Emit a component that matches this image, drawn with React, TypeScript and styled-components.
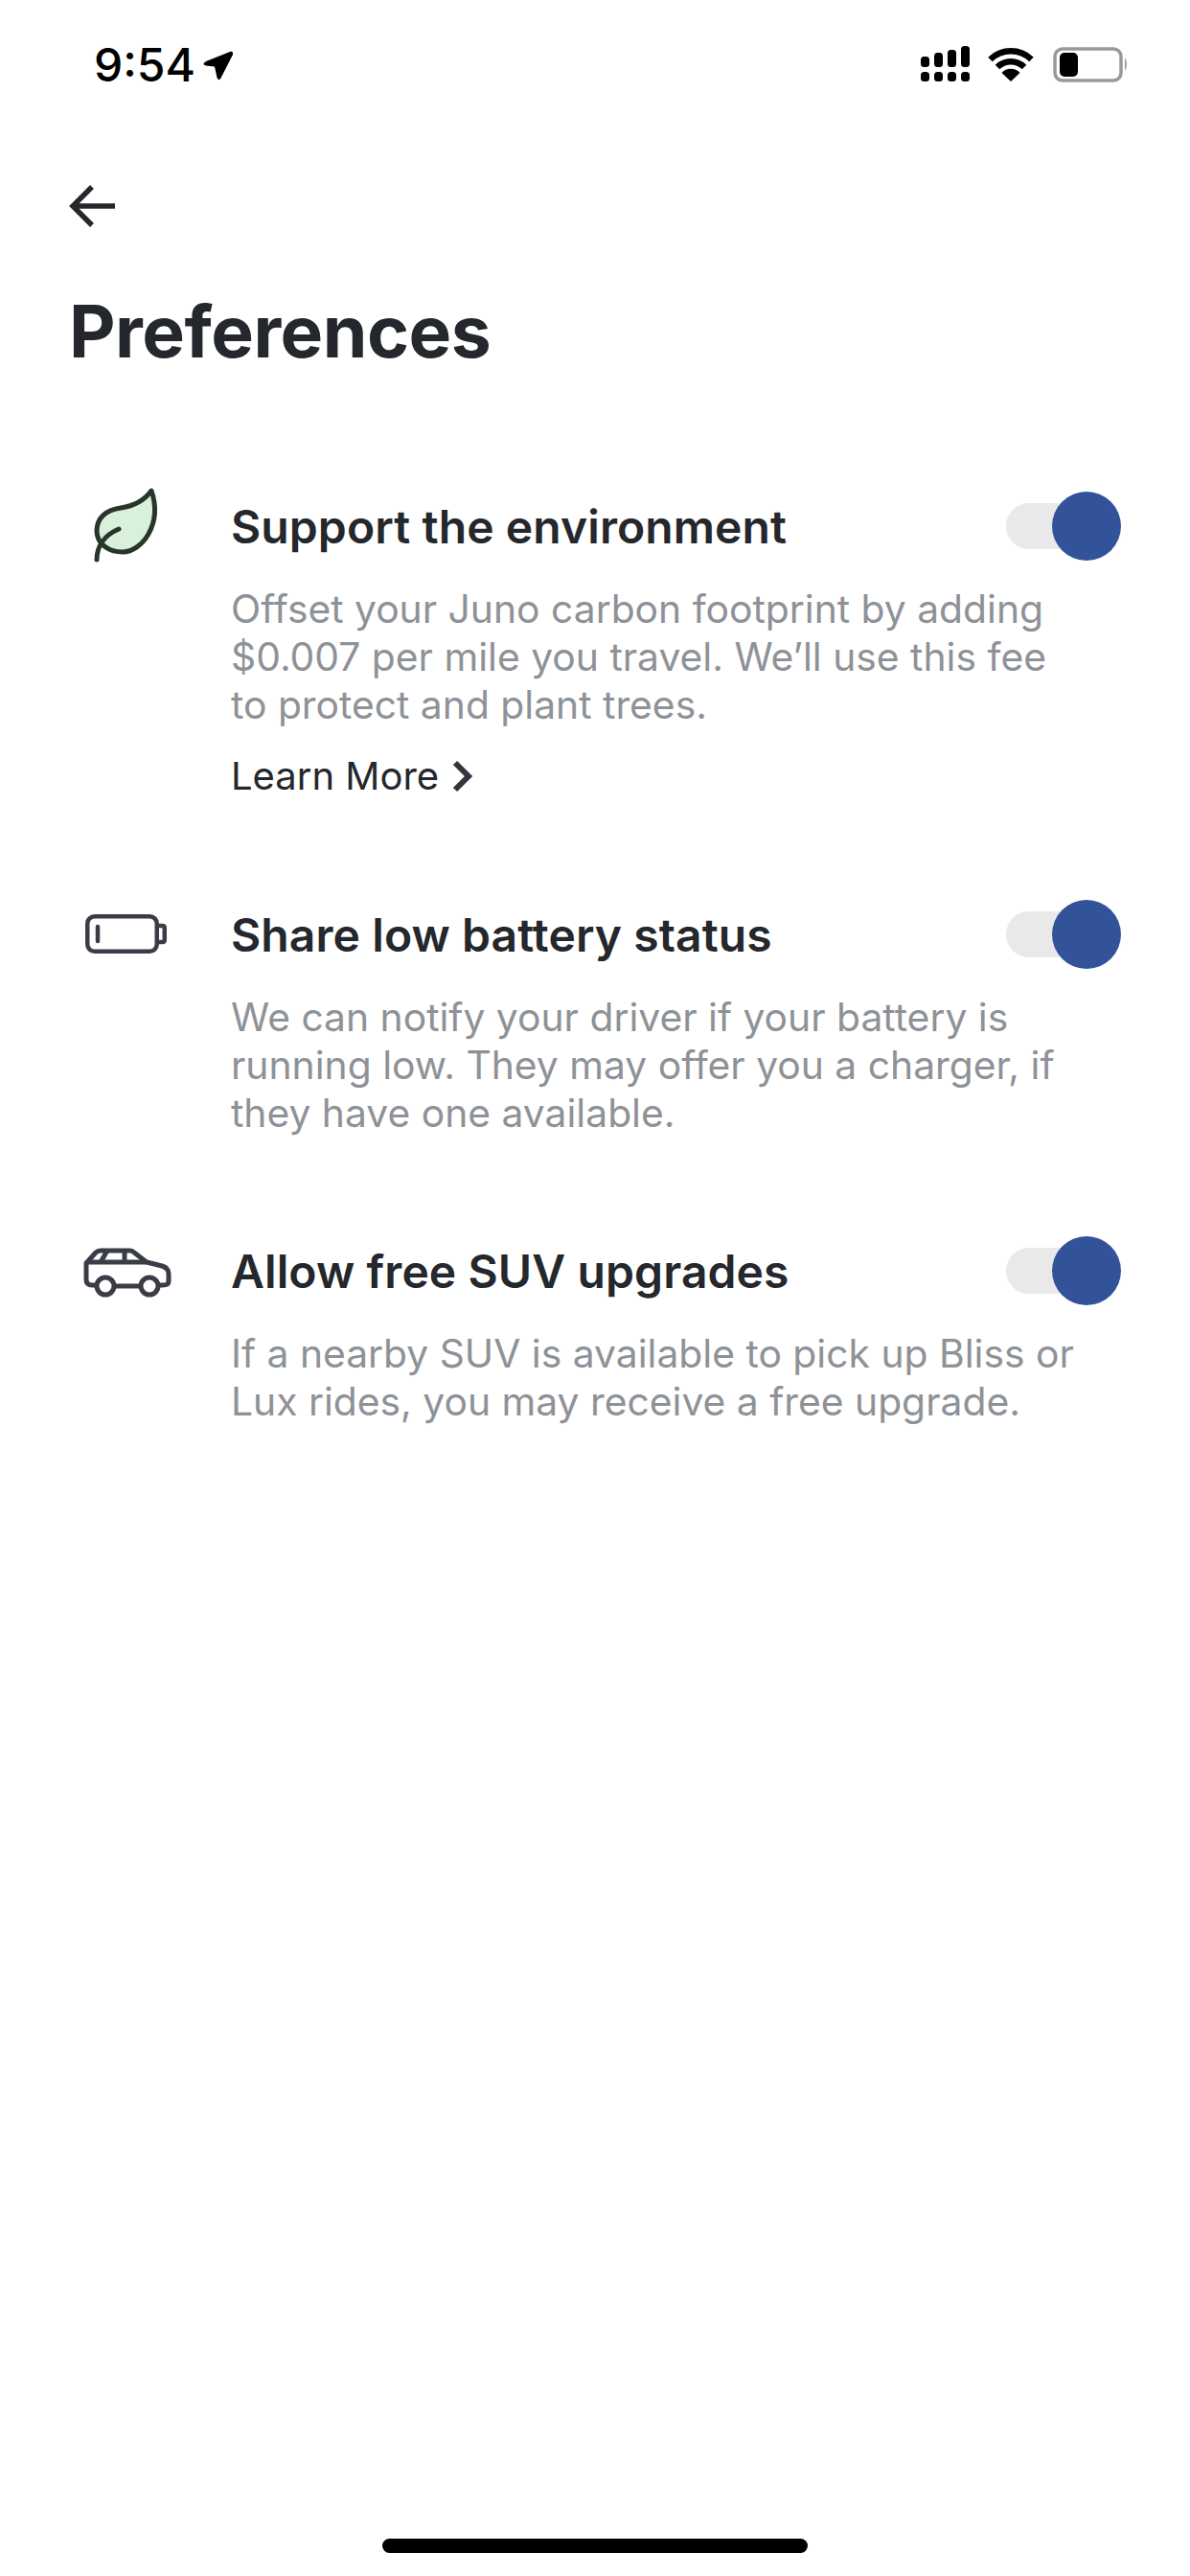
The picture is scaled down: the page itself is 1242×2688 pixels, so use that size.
import React from 'react'
import styled, { createGlobalStyle } from 'styled-components'

const GlobalStyle = createGlobalStyle`
    html, body {
        margin: 0;
        padding: 0;
        background: #fff;
    }
    body {
        font-family: Inter, "Noto Sans", "Liberation Sans", sans-serif;
    }
`

const Page = styled.div`
    width: 1242px;
    height: 2688px;
    display: flex;
    flex-direction: column;
    background: #fff;
    overflow: hidden;
`

const StatusBar = styled.div`
    display: flex;
    align-items: center;
    justify-content: space-between;
    height: 45px;
    padding: 45px 61px 0 98px;
`

const TimeGroup = styled.div`
    display: flex;
    align-items: center;
    gap: 6px;
`

const Time = styled.span`
    color: #000;
    font-size: 48px;
    font-weight: 550;
    line-height: 45px;
`

const BackButton = styled.div`
    display: flex;
    align-items: center;
    height: 50px;
    margin: 100px 0 0 72px;
`

const Heading = styled.h1`
    color: #24272c;
    font-size: 75px;
    font-weight: 700;
    line-height: 88px;
    letter-spacing: -0.5px;
    margin: 62px 0 0 72px;
`

const Settings = styled.div`
    display: flex;
    flex-direction: column;
    gap: 104px;
    margin-top: 123px;
    padding: 0 72px;
`

const Setting = styled.section`
    display: grid;
    grid-template-columns: 120px 1fr;
    column-gap: 49px;
`

const IconSlot = styled.div`
    display: flex;
    align-items: center;
    justify-content: center;
    height: 72px;
`

const SettingHeader = styled.div`
    display: flex;
    align-items: center;
    justify-content: space-between;
    height: 72px;
`

const SettingTitle = styled.h2`
    color: #24272c;
    font-size: 48px;
    font-weight: 600;
    letter-spacing: 0.1px;
    margin: 0;
`

const Toggle = styled.div`
    position: relative;
    display: flex;
    align-items: center;
    width: 120px;
    height: 72px;
`

const ToggleTrack = styled.div`
    width: 100px;
    height: 48px;
    border-radius: 24px;
    background: #e9e9e9;
`

const ToggleKnob = styled.div`
    position: absolute;
    top: 0;
    right: 0;
    width: 72px;
    height: 72px;
    border-radius: 50%;
    background: #32529a;
`

const Description = styled.p`
    color: #8e9297;
    font-size: 40.8px;
    line-height: 50px;
    margin: 25px 0 0;
    white-space: pre-line;
`

const LearnMore = styled.div`
    display: flex;
    align-items: center;
    gap: 14px;
    color: #24272c;
    font-size: 40px;
    line-height: 50px;
    margin-top: 25px;
`

const HomeIndicator = styled.div`
    width: 444px;
    height: 15px;
    border-radius: 8px;
    background: #000;
    margin: auto auto 24px;
`

const LocationArrow = () => (
    <svg width="34" height="34" viewBox="132 20 34 34">
        <path d="M162 23 L137 33 Q132 36 137 37.5 L146 38.5 L148.5 50 Q150 54 152.5 50.5 L165 26 Q165.5 22 162 23 Z" fill="#000" />
    </svg>
)

const SystemIcons = () => (
    <svg width="220" height="45" viewBox="30 15 220 45">
        <g fill="#000">
            <rect x="30" y="29" width="9" height="11" rx="3.5" />
            <rect x="44" y="25" width="9" height="15" rx="3.5" />
            <rect x="58" y="22" width="9" height="18" rx="3.5" />
            <rect x="72" y="18" width="9" height="22" rx="3.5" />
            <rect x="30" y="45" width="9" height="10" rx="3.5" />
            <rect x="44" y="45" width="9" height="10" rx="3.5" />
            <rect x="58" y="45" width="9" height="10" rx="3.5" />
            <rect x="72" y="45" width="9" height="10" rx="3.5" />
            <path d="M124 55 L114.5 46 A13 13 0 0 1 133.5 46 Z" />
        </g>
        <g fill="none" stroke="#000" strokeWidth="6.5">
            <path d="M102.5 32 A31 31 0 0 1 145.5 32" />
            <path d="M110 40 A20 20 0 0 1 138 40" />
        </g>
        <rect x="170" y="21" width="69" height="33" rx="8" fill="none" stroke="#999" strokeWidth="3.5" />
        <rect x="175" y="25" width="19" height="25" rx="5" fill="#000" />
        <path d="M243 30 Q247 37 243 44 Z" fill="#999" />
    </svg>
)

const BackArrow = () => (
    <svg width="50" height="46" viewBox="0 0 50 46">
        <path d="M48 23 H4 M24 3 L4 23 L24 43" fill="none" stroke="#24272c" strokeWidth="5.5" />
    </svg>
)

const LeafIcon = () => (
    <svg width="84" height="96" viewBox="30 12 84 96">
        <path
            d="M98 23 C90 34 80 39 66 41 C50 43 41 52 41 65 C41 79 54 87 68 87 C88 87 110 58 98 23 Z"
            fill="#d9f0db"
            stroke="#28352b"
            strokeWidth="5"
            strokeLinejoin="round"
        />
        <path d="M41 95 C41 80 50 69 64 63" fill="none" stroke="#28352b" strokeWidth="5" strokeLinecap="round" />
    </svg>
)

const BatteryIcon = () => (
    <svg width="100" height="60" viewBox="12 15 100 60">
        <g fill="none" stroke="#3a3d45" strokeWidth="4.5">
            <rect x="21.25" y="26.25" width="72.5" height="36.5" rx="7.5" />
            <path d="M96 36 H99.5 Q101.75 36 101.75 38 V51 Q101.75 53 99.5 53 H96" />
            <path d="M32 37 V52" strokeLinecap="round" />
        </g>
    </svg>
)

const CarIcon = () => (
    <svg width="100" height="60" viewBox="12 14 100 60">
        <g fill="none" stroke="#3a3d45" strokeWidth="5" strokeLinejoin="round">
            <path d="M31 59 H26 Q20 59 20 53 V36 L30 25 Q32 23 35 23 H66 Q68 23 70 25 L83 35 L99 39 Q106 41 106 47 V55 Q106 59 100 59 H95" />
            <path d="M49 60 H77" />
            <path d="M20 35 H83" />
            <path d="M42 23 L35 35" />
            <path d="M60 23 V35" />
            <circle cx="40" cy="60" r="9" />
            <circle cx="86" cy="60" r="9" />
        </g>
    </svg>
)

const Chevron = () => (
    <svg width="22" height="34" viewBox="0 0 22 34">
        <path d="M3 3 L17 17 L3 31" fill="none" stroke="#33363d" strokeWidth="6" />
    </svg>
)

type SettingItem = {
    title: string
    description: string
    icon: React.ReactNode
    learnMore?: boolean
}

const settings: SettingItem[] = [
    {
        title: 'Support the environment',
        description:
            'Offset your Juno carbon footprint by adding\n$0.007 per mile you travel. We\u2019ll use this fee\nto protect and plant trees.',
        icon: <LeafIcon />,
        learnMore: true,
    },
    {
        title: 'Share low battery status',
        description:
            'We can notify your driver if your battery is\nrunning low. They may offer you a charger, if\nthey have one available.',
        icon: <BatteryIcon />,
    },
    {
        title: 'Allow free SUV upgrades',
        description: 'If a nearby SUV is available to pick up Bliss or\nLux rides, you may receive a free upgrade.',
        icon: <CarIcon />,
    },
]

const App: React.FC = () => (
    <Page>
        <GlobalStyle />
        <StatusBar>
            <TimeGroup>
                <Time>9:54</Time>
                <LocationArrow />
            </TimeGroup>
            <SystemIcons />
        </StatusBar>
        <BackButton>
            <BackArrow />
        </BackButton>
        <Heading>Preferences</Heading>
        <Settings>
            {settings.map((item) => (
                <Setting key={item.title}>
                    <IconSlot>{item.icon}</IconSlot>
                    <div>
                        <SettingHeader>
                            <SettingTitle>{item.title}</SettingTitle>
                            <Toggle>
                                <ToggleTrack />
                                <ToggleKnob />
                            </Toggle>
                        </SettingHeader>
                        <Description>{item.description}</Description>
                        {item.learnMore && (
                            <LearnMore>
                                Learn More
                                <Chevron />
                            </LearnMore>
                        )}
                    </div>
                </Setting>
            ))}
        </Settings>
        <HomeIndicator />
    </Page>
)

export default App
